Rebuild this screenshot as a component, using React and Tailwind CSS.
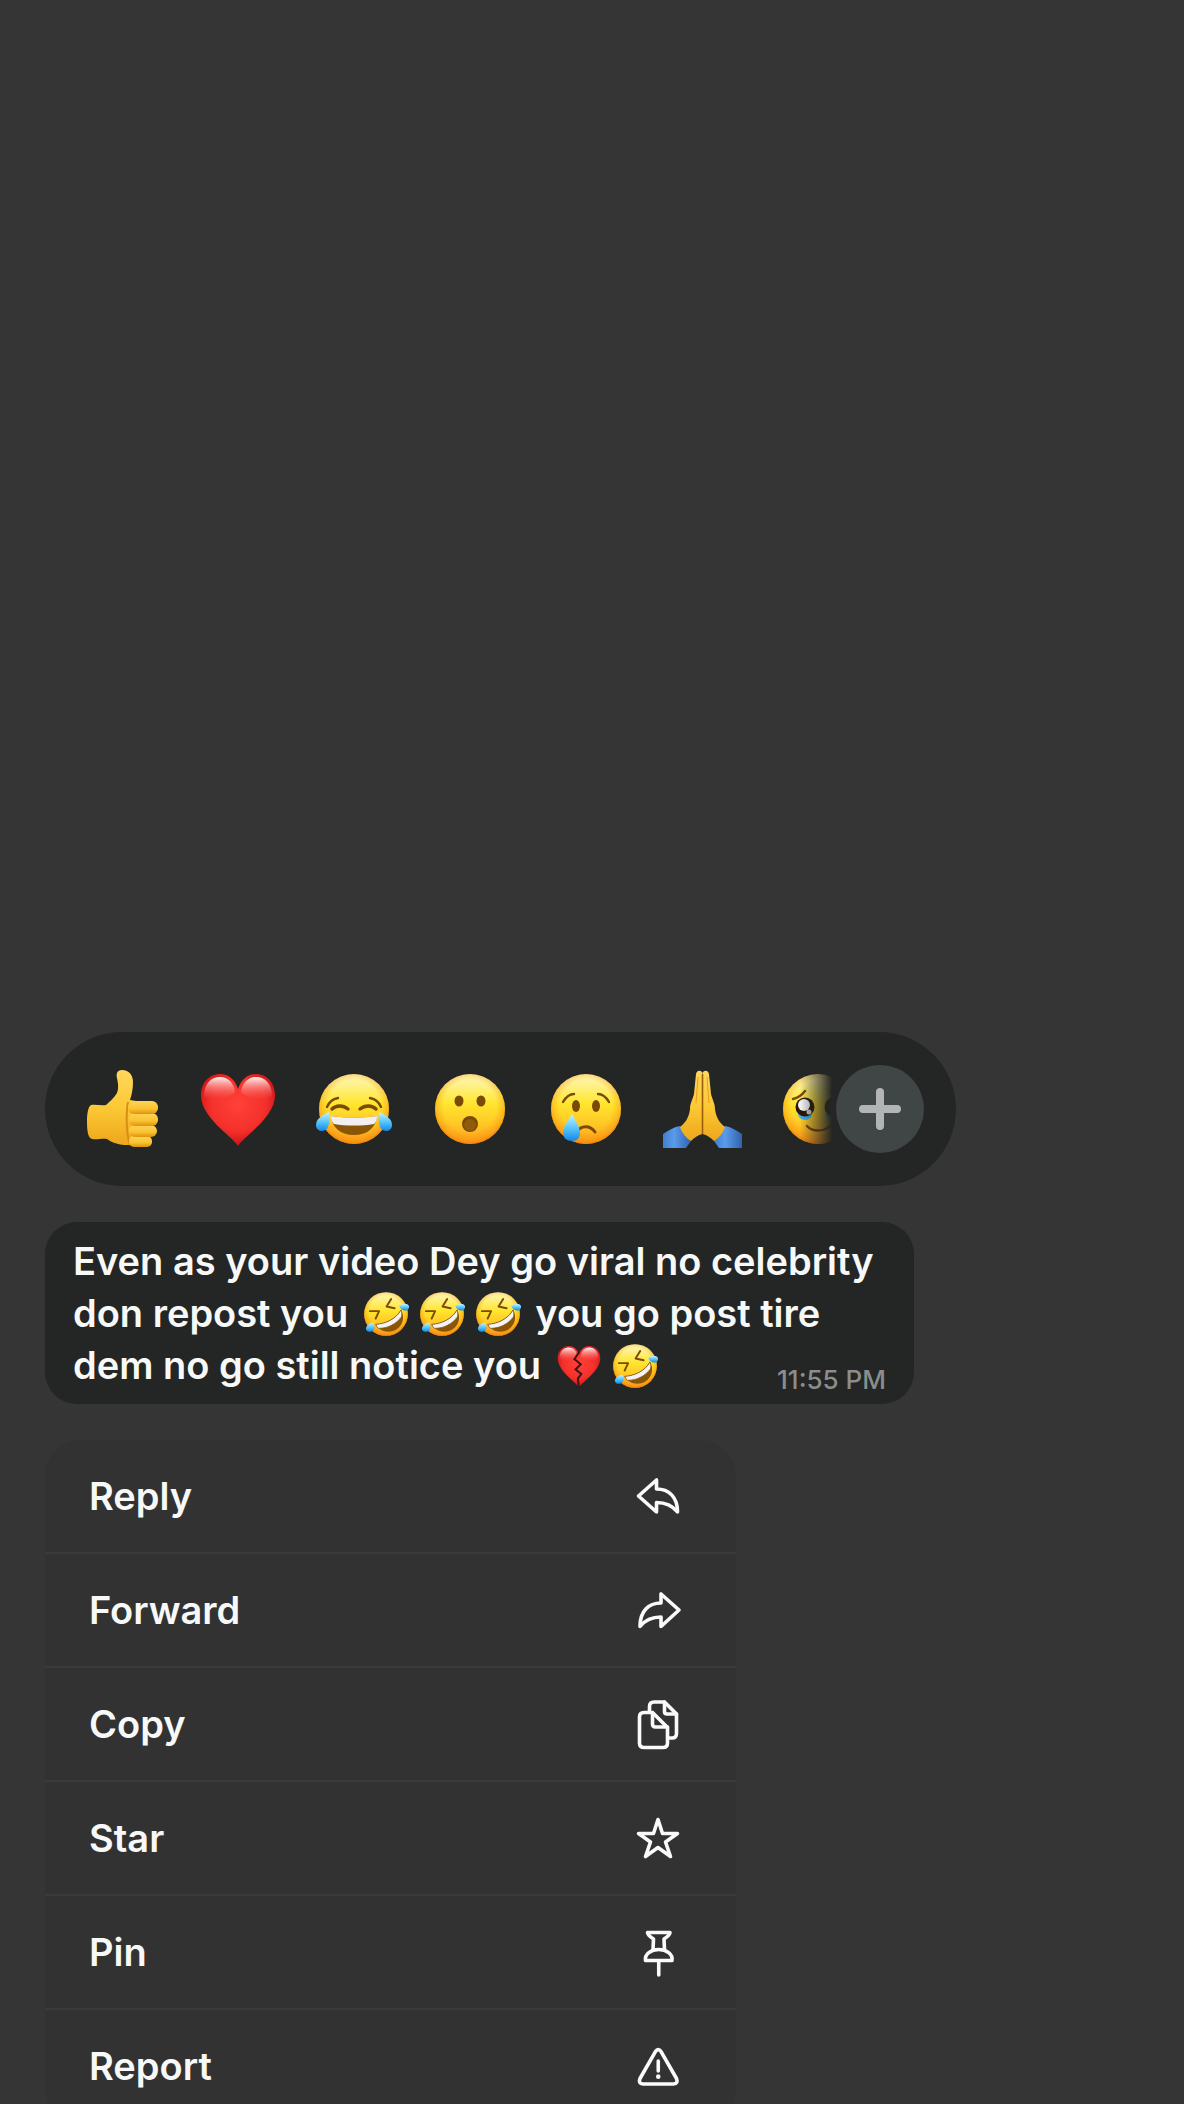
import React from "react";

const BROWN = "#7a4a06";

// Gradients shared by every emoji on the page
function EmojiDefs() {
  return (
    <svg className="absolute h-0 w-0" aria-hidden="true">
      <defs>
        <linearGradient id="face" x1="0" y1="0" x2="0" y2="1">
          <stop offset="0" stopColor="#fff6b0" />
          <stop offset="0.14" stopColor="#fff291" />
          <stop offset="0.42" stopColor="#ffe62e" />
          <stop offset="0.7" stopColor="#ffc926" />
          <stop offset="1" stopColor="#ff9e1c" />
        </linearGradient>
        <radialGradient id="faceEdge" cx="0.5" cy="0.46" r="0.54">
          <stop offset="0.7" stopColor="#f58a0c" stopOpacity="0" />
          <stop offset="0.9" stopColor="#f58a0c" stopOpacity="0.4" />
          <stop offset="1" stopColor="#ef8208" stopOpacity="0.9" />
        </radialGradient>
        <radialGradient id="heart" cx="0.5" cy="0.42" r="0.62">
          <stop offset="0" stopColor="#ff4238" />
          <stop offset="0.6" stopColor="#f4302b" />
          <stop offset="1" stopColor="#c40d14" />
        </radialGradient>
        <linearGradient id="heartShine" x1="0" y1="0" x2="0" y2="1">
          <stop offset="0" stopColor="#fff" stopOpacity="0.95" />
          <stop offset="1" stopColor="#ff6a60" stopOpacity="0" />
        </linearGradient>
        <linearGradient id="tear" x1="0" y1="0" x2="0" y2="1">
          <stop offset="0" stopColor="#c9f2ff" />
          <stop offset="0.5" stopColor="#5cc8fa" />
          <stop offset="1" stopColor="#1287e8" />
        </linearGradient>
        <linearGradient id="skin" x1="0" y1="0" x2="0" y2="1">
          <stop offset="0" stopColor="#ffd75c" />
          <stop offset="0.5" stopColor="#fcc935" />
          <stop offset="1" stopColor="#eda61c" />
        </linearGradient>
        <linearGradient id="finger" x1="0" y1="0" x2="0" y2="1">
          <stop offset="0" stopColor="#ffd458" />
          <stop offset="0.6" stopColor="#fbc230" />
          <stop offset="1" stopColor="#dd930f" />
        </linearGradient>
        <linearGradient id="sleeve" x1="0" y1="0" x2="1" y2="0">
          <stop offset="0" stopColor="#3f7fd0" />
          <stop offset="0.4" stopColor="#5a9bea" />
          <stop offset="1" stopColor="#2f62ad" />
        </linearGradient>
      </defs>
    </svg>
  );
}

function Face({ r = 35 }) {
  return (
    <>
      <circle cx="40" cy="40" r={r} fill="url(#face)" />
      <circle cx="40" cy="40" r={r} fill="url(#faceEdge)" />
    </>
  );
}

function ThumbsUp() {
  return (
    <>
      <path
        d="M9 36 C6 38 5 45 5 52 C5 62 6 69 10 70 C16 71 20 69 25 70 C31 74 37 76 46 76 L60 76 L60 33 L48 31 C50 25 51 19 51 13 C51 5 46 1 40 1 C35 1 34 5 35 9 C36 14 37 19 35 24 C32 29 28 32 24 36 C19 37 14 35 9 36 Z"
        fill="url(#skin)"
      />
      <path d="M46 33 C44 44 44 65 48 76" fill="none" stroke="#d78f10" strokeWidth="2" />
      <rect x="47" y="67" width="23" height="11" rx="5" fill="url(#finger)" />
      <rect x="47" y="56" width="28" height="12" rx="6" fill="url(#finger)" />
      <rect x="47" y="44" width="29" height="13" rx="6" fill="url(#finger)" />
      <rect x="46" y="32" width="30" height="13" rx="6" fill="url(#finger)" />
    </>
  );
}

function Heart() {
  return (
    <>
      <path
        d="M40 77 C34 67 3 49 3 26 C3 14 11 5 22 5 C31 5 37 11 40 20 C43 11 49 5 58 5 C69 5 77 14 77 26 C77 49 46 67 40 77 Z"
        fill="url(#heart)"
      />
      <path d="M6 27 C6 15 13 8 22 8 C31 8 36 15 37 23 C30 30 14 34 6 27 Z" fill="url(#heartShine)" />
      <path d="M74 27 C74 15 67 8 58 8 C49 8 44 15 43 23 C50 30 66 34 74 27 Z" fill="url(#heartShine)" />
    </>
  );
}

function BrokenHeart() {
  return (
    <>
      <Heart />
      <path d="M40 16 L32 28 L43 37 L34 46 L44 54 L38 62 L40 79" fill="none" stroke="#3a1716" strokeWidth="3.5" />
    </>
  );
}

function Joy() {
  return (
    <>
      <Face />
      <g fill="none" stroke={BROWN} strokeLinecap="round">
        <path d="M13 38 C15 33 19 30 24 29" strokeWidth="2.4" />
        <path d="M67 38 C65 33 61 30 56 29" strokeWidth="2.4" />
        <path d="M18 40 C22 36 29 36 34 40" strokeWidth="3.4" />
        <path d="M46 40 C51 36 58 36 62 40" strokeWidth="3.4" />
      </g>
      <path d="M17 47 C32 49 48 49 63 47 C62 59 53 66 40 66 C27 66 18 59 17 47 Z" fill="#8a5606" />
      <path d="M17 47 C32 49 48 49 63 47 C63 51 62 53 60 55 C48 57 32 57 20 55 C18 53 17 51 17 47 Z" fill="#f3eff0" />
      <path d="M15 43 C8 46 2 50 2 56 C2 60 5 62 8 62 C15 62 16 53 15 43 Z" fill="url(#tear)" />
      <path d="M65 43 C72 46 78 50 78 56 C78 60 75 62 72 62 C65 62 64 53 65 43 Z" fill="url(#tear)" />
    </>
  );
}

function Surprised() {
  return (
    <>
      <Face />
      <ellipse cx="29" cy="32" rx="4.5" ry="5.5" fill={BROWN} />
      <ellipse cx="51" cy="32" rx="4.5" ry="5.5" fill={BROWN} />
      <circle cx="40" cy="55" r="8" fill={BROWN} />
      <circle cx="40" cy="56" r="6" fill="#8f5c0a" />
    </>
  );
}

function Crying() {
  return (
    <>
      <Face />
      <ellipse cx="30" cy="37" rx="4" ry="6" fill={BROWN} />
      <ellipse cx="50" cy="37" rx="4" ry="6" fill={BROWN} />
      <g fill="none" stroke={BROWN} strokeLinecap="round" strokeWidth="2.4">
        <path d="M17 33 C20 28 24 25 28 25" />
        <path d="M63 33 C60 28 56 25 52 25" />
        <path d="M31 63 C35 56 44 56 49 63" strokeWidth="3" />
      </g>
      <path d="M26 45 C21 53 17 58 17 64 C17 69 21 72 26 72 C31 72 34 69 34 64 C34 58 30 53 26 45 Z" fill="url(#tear)" />
    </>
  );
}

function Pray() {
  return (
    <>
      <path d="M1 65 C7 61 12 58 18 57 L29 72 L24 79 L1 79 Z" fill="url(#sleeve)" />
      <path d="M80 65 C74 61 69 58 63 57 L52 72 L57 79 L80 79 Z" fill="url(#sleeve)" />
      <path
        d="M40.5 4 C39 1 35 1 34 5 L32 25 C31 30 28 34 28 40 C27 49 23 54 18 58 C20 64 24 69 29 72 C32 69 36 66 40.5 65 Z"
        fill="url(#skin)"
      />
      <path
        d="M40.5 4 C42 1 46 1 47 5 L49 25 C50 30 53 34 53 40 C54 49 58 54 63 58 C61 64 57 69 52 72 C49 69 45 66 40.5 65 Z"
        fill="url(#skin)"
      />
      <path d="M40.5 5 L40.5 65" stroke="#9c5f08" strokeWidth="1.6" />
      <path d="M36 8 L34 34 M45 8 L47 34" stroke="#e8a01c" strokeWidth="1" fill="none" />
    </>
  );
}

function HoldingTears() {
  return (
    <>
      <Face />
      <g fill="none" stroke={BROWN} strokeLinecap="round" strokeWidth="2.4">
        <path d="M15 30 C20 29 24 26 27 22" />
        <path d="M65 30 C60 29 56 26 53 22" />
        <path d="M29 57 C34 63 46 63 52 57" />
      </g>
      <ellipse cx="27" cy="45" rx="7" ry="6" fill="#39b5f2" />
      <ellipse cx="55" cy="45" rx="7" ry="6" fill="#39b5f2" />
      <circle cx="27" cy="38" r="9.5" fill="#2b1608" />
      <circle cx="56" cy="38" r="9.5" fill="#2b1608" />
      <circle cx="26" cy="36" r="6" fill="#f5f5f5" />
      <circle cx="31" cy="43" r="2.5" fill="#cfcfcf" />
    </>
  );
}

function Rofl() {
  return (
    <>
      <Face r={38} />
      <g fill="none" stroke={BROWN} strokeWidth="3.4" strokeLinecap="round" strokeLinejoin="round">
        <path d="M12 35 L28 35 L22 48" />
        <path d="M49 14 L41 27 L55 30" />
      </g>
      <path d="M22 58 C40 57 58 48 66 33 C73 45 70 59 58 67 C46 74 30 72 22 58 Z" fill="#8a5606" />
      <path
        d="M22 58 C40 57 58 48 66 33 C68 37 68 41 67 45 C58 57 44 65 27 65 C25 63 23 61 22 58 Z"
        fill="#f7f2f3"
        stroke={BROWN}
        strokeWidth="1.4"
      />
      <path d="M18 55 C10 56 5 61 5 66 C6 71 12 72 16 70 C20 68 21 62 18 55 Z" fill="url(#tear)" />
      <path d="M63 26 C70 21 77 21 80 26 C81 31 77 34 73 34 C69 34 65 31 63 26 Z" fill="url(#tear)" />
    </>
  );
}

const reactions = [
  { label: "Thumbs up", Drawing: ThumbsUp },
  { label: "Heart", Drawing: Heart },
  { label: "Tears of joy", Drawing: Joy },
  { label: "Surprised", Drawing: Surprised },
  { label: "Crying", Drawing: Crying },
  { label: "Folded hands", Drawing: Pray },
  { label: "Holding back tears", Drawing: HoldingTears },
];

function TextEmoji({ label, children }) {
  return (
    <svg viewBox="0 0 80 80" role="img" aria-label={label} className="mx-[5px] inline-block size-[46px] align-[-10px]">
      {children}
    </svg>
  );
}

const menuItems = [
  {
    label: "Reply",
    icon: <path d="M4.5 24 L22.5 8 V17 C35 17 43.5 25 43.5 40 C38 33 32 30.5 22.5 30.5 V40 Z" />,
  },
  {
    label: "Forward",
    icon: <path d="M45 24 L27 8 V17 C14.5 17 6 25 6 40.5 C11.5 33.5 17.5 31 27 31 V40.5 Z" />,
  },
  {
    label: "Copy",
    icon: (
      <>
        <path d="M18.5 12.5 H10 Q5.5 12.5 5.5 17 V43 Q5.5 47.5 10 47.5 H29 Q33.5 47.5 33.5 43 V27.5 Z" />
        <path d="M18.5 12.5 V24 Q18.5 27 21.5 27 H33.5" />
        <path d="M15.5 11 V6.5 Q15.5 2 20 2 H30.5 L42.5 14 V33.5 Q42.5 38 38 38 H35" />
        <path d="M30.5 2 V11.5 Q30.5 14 33 14 H42.5" />
      </>
    ),
  },
  {
    label: "Star",
    icon: <path d="M24 5.5 L28.5 19.5 H43.5 L31.5 28 L36.5 42.5 L24 33.5 L11.5 42.5 L16.5 28 L4.5 19.5 H19.5 Z" />,
  },
  {
    label: "Pin",
    icon: (
      <>
        <path d="M13.5 4.5 H36 Q36 7 30 11 L30.5 22 M13.5 4.5 Q13.5 7 19.5 11 L19 22" />
        <path d="M11.5 32.5 C10.5 26 17 21.5 24.75 21.5 C32.5 21.5 39 26 38 32.5 Z" />
        <path d="M24.75 33 V47" />
      </>
    ),
  },
  {
    label: "Report",
    icon: (
      <>
        <path d="M21.3 9.8 Q24.2 5.5 27.2 9.8 L42.5 36.5 Q44.5 41.7 39.5 42 H9 Q4 41.7 6 36.5 Z" />
        <path d="M24.25 19 V29" />
        <path d="M24.25 34.5 V34.7" strokeWidth="4.5" />
      </>
    ),
  },
];

function ReactionBar() {
  return (
    <div className="flex h-[154px] w-full max-w-[911px] items-center rounded-full bg-[#242625] pr-8 pl-[37px]">
      <div className="flex min-w-0 flex-1 gap-9 overflow-hidden [mask-image:linear-gradient(to_right,#000_calc(100%-36px),transparent_calc(100%-4px))]">
        {reactions.map(({ label, Drawing }) => (
          <button key={label} type="button" aria-label={label} className="size-20 shrink-0">
            <svg viewBox="0 0 80 80" className="size-20">
              <Drawing />
            </svg>
          </button>
        ))}
      </div>
      <button
        type="button"
        aria-label="More reactions"
        className="flex size-[88px] shrink-0 items-center justify-center rounded-full bg-[#404545]"
      >
        <svg viewBox="0 0 42 42" className="size-[42px]" stroke="#b3b4b5" strokeWidth="8" strokeLinecap="round">
          <path d="M21 4 V38 M4 21 H38" />
        </svg>
      </button>
    </div>
  );
}

function MessageBubble() {
  return (
    <div className="relative w-full max-w-[869px] rounded-[32px] bg-[#242625] px-7 py-[13px]">
      <p className="text-[38px] leading-[52px] font-semibold text-[#f7f8f8]">
        Even as your video Dey go viral no celebrity
        <br />
        don repost you <TextEmoji label="Rolling on the floor laughing"><Rofl /></TextEmoji>
        <TextEmoji label="Rolling on the floor laughing"><Rofl /></TextEmoji>
        <TextEmoji label="Rolling on the floor laughing"><Rofl /></TextEmoji> you go post tire
        <br />
        dem no go still notice you <TextEmoji label="Broken heart"><BrokenHeart /></TextEmoji>
        <TextEmoji label="Rolling on the floor laughing"><Rofl /></TextEmoji>
      </p>
      <time className="absolute right-7 bottom-2 text-[26px] leading-8 font-medium text-[#8b8d8c]">11:55 PM</time>
    </div>
  );
}

function ContextMenu() {
  return (
    <ul className="-mb-5 w-full max-w-[691px] overflow-hidden rounded-[36px] bg-[#323232]">
      {menuItems.map((item) => (
        <li key={item.label} className="h-[114px] border-b-2 border-[#3b3b3b] last:border-transparent">
          <button
            type="button"
            className="flex h-full w-full items-center justify-between pr-[54px] pl-11 text-[38px] leading-[52px] font-semibold text-[#f7f8f8]"
          >
            {item.label}
            <svg
              viewBox="0 0 48 48"
              className="size-12 overflow-visible"
              fill="none"
              stroke="#fafafa"
              strokeWidth="3.6"
              strokeLinecap="round"
              strokeLinejoin="round"
            >
              {item.icon}
            </svg>
          </button>
        </li>
      ))}
    </ul>
  );
}

export default function App() {
  return (
    <main className="flex h-screen flex-col justify-end gap-9 overflow-hidden bg-[#353535] px-[45px] font-['Inter',sans-serif]">
      <EmojiDefs />
      <ReactionBar />
      <MessageBubble />
      <ContextMenu />
    </main>
  );
}
